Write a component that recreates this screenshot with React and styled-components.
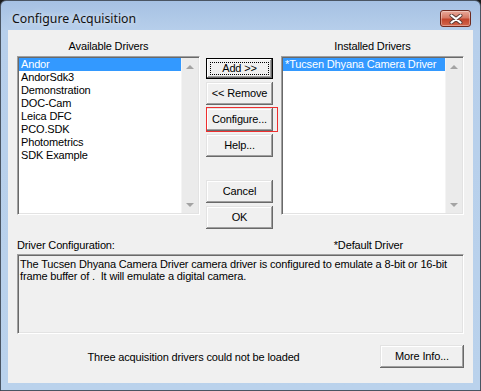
import React from 'react'
import styled, { createGlobalStyle } from 'styled-components'

const GlobalStyle = createGlobalStyle`
  html, body {
    margin: 0;
    padding: 0;
    width: 481px;
    height: 391px;
    overflow: hidden;
    background: #1b1b1b;
  }
  * { box-sizing: border-box; }
`

const Window = styled.div`
  width: 481px;
  height: 391px;
  border: 1px solid #4a5563;
  border-radius: 6px 6px 0 0;
  background: linear-gradient(180deg, #a6c1e3 0px, #b7cfeb 30px, #bad2ec 100%);
  display: flex;
  flex-direction: column;
  font-family: "Liberation Sans", Arial, sans-serif;
  font-size: 11px;
  letter-spacing: -0.15px;
  color: #000;
`

const TitleBar = styled.div`
  height: 29px;
  display: flex;
  align-items: flex-start;
  padding-left: 11px;
`

const Title = styled.span`
  font-family: "Noto Sans", "Open Sans", sans-serif;
  font-size: 12.3px;
  letter-spacing: 0;
  line-height: 18px;
  margin-top: 9px;
  color: #111;
  text-shadow: 0 0 6px rgba(255, 255, 255, 0.9);
`

const CloseButton = styled.div`
  margin-left: auto;
  margin-right: 9px;
  margin-top: 9px;
  width: 31px;
  height: 17px;
  border: 1px solid #6f2a1f;
  border-radius: 3px;
  background: linear-gradient(180deg, #e9a99a 0%, #d67a66 45%, #c2452c 55%, #d4674d 100%);
  box-shadow: inset 0 0 0 1px rgba(255, 255, 255, 0.35);
  display: flex;
  align-items: center;
  justify-content: center;
`

const Client = styled.div`
  flex: 1;
  margin: 0 7px 7px 7px;
  background: #f0f0f0;
  padding: 10px 9px 0 9px;
  display: flex;
  flex-direction: column;
`

const TopGrid = styled.div`
  display: grid;
  grid-template-columns: 183px 1fr 183px;
  grid-template-rows: 16px 159px;
`

const Caption = styled.div`
  text-align: center;
  line-height: 13px;
`

const Sunken = styled.div`
  border-style: solid;
  border-width: 1px;
  border-color: #a0a0a0 #ffffff #ffffff #a0a0a0;
  box-shadow: inset 1px 1px 0 #696969, inset -1px -1px 0 #e3e3e3;
  padding: 1px;
`

const ListBox = styled(Sunken)`
  background: #fff;
  display: flex;
`

const Items = styled.div`
  flex: 1;
`

const Item = styled.div`
  height: 13px;
  line-height: 13px;
  padding-left: 2px;
  white-space: nowrap;
  background: ${p => (p.$selected ? '#3399ff' : 'transparent')};
  color: ${p => (p.$selected ? '#fff' : '#000')};
`

const ScrollBar = styled.div`
  width: 17px;
  background: #ebebeb;
  border-left: 1px solid #f4f4f4;
  display: flex;
  flex-direction: column;
  justify-content: space-between;
  align-items: center;
  padding: 7px 0 6px;
`

const Arrow = styled.div`
  width: 0;
  height: 0;
  border-left: 4px solid transparent;
  border-right: 4px solid transparent;
  ${p => (p.$down
    ? 'border-top: 4px solid #a3a3a3;'
    : 'border-bottom: 4px solid #a3a3a3;')}
`

const ButtonColumn = styled.div`
  grid-row: 2;
  grid-column: 2;
  display: flex;
  flex-direction: column;
  align-items: center;
  padding-top: 2px;
  padding-right: 2px;
  gap: 3px;
`

const Button = styled.div`
  flex-shrink: 0;
  width: ${p => p.$width || 67}px;
  height: 23px;
  background: #f0f0f0;
  display: flex;
  align-items: center;
  justify-content: center;
  line-height: 13px;
  position: relative;
  margin-top: ${p => p.$gap || 0}px;
  box-shadow: inset -1px -1px 0 #696969, inset 1px 1px 0 #e3e3e3,
    inset -2px -2px 0 #a0a0a0, inset 2px 2px 0 #ffffff;
  ${p => p.$default && `
    height: 21px;
    box-shadow: inset 0 0 0 1px #000, inset -2px -2px 0 #696969, inset 2px 2px 0 #ffffff,
      inset -3px -3px 0 #a0a0a0;
  `}
`

const FocusRing = styled.span`
  position: absolute;
  inset: 4px;
  border: 1px dotted #000;
`

const Highlight = styled.span`
  position: absolute;
  top: -1px;
  left: 0;
  right: -5px;
  bottom: -1px;
  border: 1px solid #ee2f2f;
`

const InfoHeader = styled.div`
  margin-top: 24px;
  display: flex;
  line-height: 13px;
  height: 15px;
`

const DefaultNote = styled.span`
  margin-left: 219px;
`

const ConfigBox = styled(Sunken)`
  height: 80px;
  background: #f0f0f0;
  padding: 3px 2px;
  line-height: 12px;
  white-space: pre-wrap;
`

const Footer = styled.div`
  margin-top: 11px;
  display: flex;
  align-items: center;
`

const Message = styled.div`
  flex: 1;
  text-align: center;
  padding-right: 10px;
`

const available = [
  'Andor',
  'AndorSdk3',
  'Demonstration',
  'DOC-Cam',
  'Leica DFC',
  'PCO.SDK',
  'Photometrics',
  'SDK Example'
]

const installed = ['*Tucsen Dhyana Camera Driver']

function DriverList ({ items, selected }) {
  return (
    <ListBox>
      <Items>
        {items.map((name, i) => (
          <Item key={name} $selected={i === selected}>{name}</Item>
        ))}
      </Items>
      <ScrollBar>
        <Arrow />
        <Arrow $down />
      </ScrollBar>
    </ListBox>
  )
}

export default function App () {
  return (
    <Window>
      <GlobalStyle />
      <TitleBar>
        <Title>Configure Acquisition</Title>
        <CloseButton>
          <svg width="14" height="10" viewBox="0 0 14 10">
            <path d="M2.5 1.5 L11.5 8.5 M11.5 1.5 L2.5 8.5" stroke="#5a3b36" strokeWidth="4" strokeLinecap="round" />
            <path d="M2.5 1.5 L11.5 8.5 M11.5 1.5 L2.5 8.5" stroke="#ffffff" strokeWidth="2.2" strokeLinecap="round" />
          </svg>
        </CloseButton>
      </TitleBar>
      <Client>
        <TopGrid>
          <Caption>Available Drivers</Caption>
          <div />
          <Caption>Installed Drivers</Caption>
          <DriverList items={available} selected={0} />
          <ButtonColumn>
            <Button $default>Add &gt;&gt;<FocusRing /></Button>
            <Button>&lt;&lt; Remove</Button>
            <Button>Configure...<Highlight /></Button>
            <Button>Help...</Button>
            <Button $gap={20}>Cancel</Button>
            <Button>OK</Button>
          </ButtonColumn>
          <DriverList items={installed} selected={0} />
        </TopGrid>
        <InfoHeader>
          <span>Driver Configuration:</span>
          <DefaultNote>*Default Driver</DefaultNote>
        </InfoHeader>
        <ConfigBox>
          {'The Tucsen Dhyana Camera Driver camera driver is configured to emulate a 8-bit or 16-bit\nframe buffer of .  It will emulate a digital camera.'}
        </ConfigBox>
        <Footer>
          <Message>Three acquisition drivers could not be loaded</Message>
          <Button $width={84}>More Info...</Button>
        </Footer>
      </Client>
    </Window>
  )
}
